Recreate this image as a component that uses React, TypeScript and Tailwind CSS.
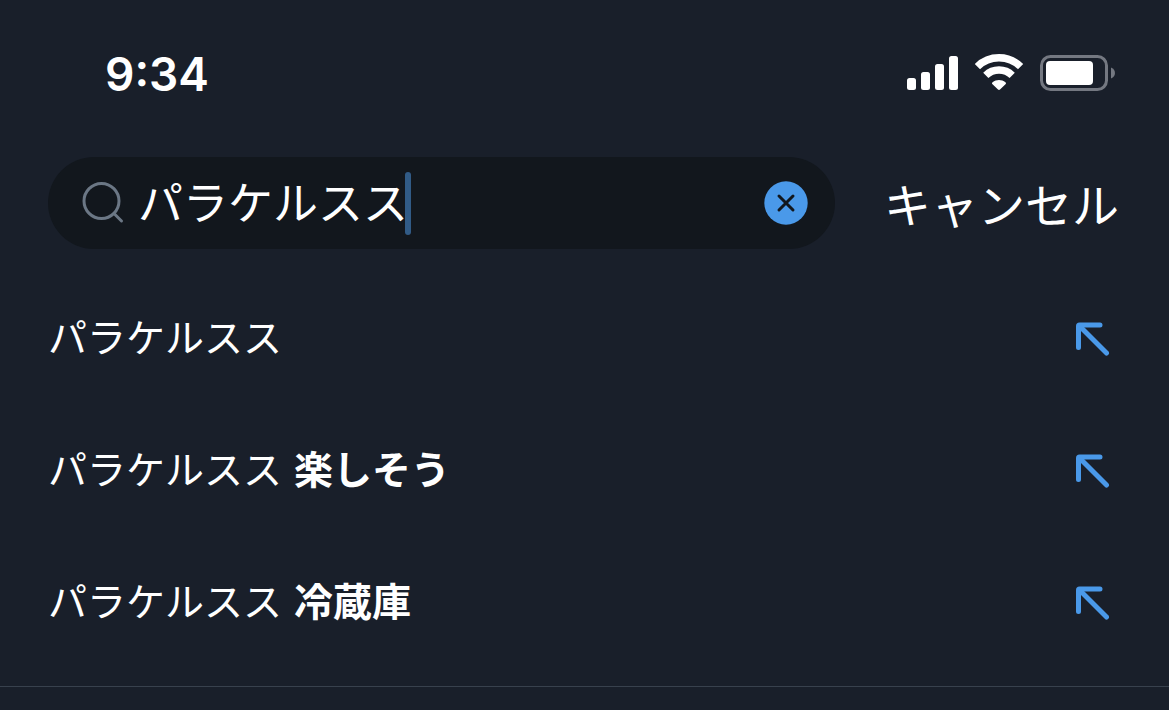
import { useRef, useState } from "react";

type Suggestion = { base: string; extra?: string };

const suggestions: Suggestion[] = [
  { base: "パラケルスス" },
  { base: "パラケルスス", extra: "楽しそう" },
  { base: "パラケルスス", extra: "冷蔵庫" },
];

function SignalIcon() {
  return (
    <svg width="52" height="36" viewBox="0 0 52 36" fill="#fff" aria-hidden="true">
      <rect x="1" y="23" width="9" height="12" rx="2.5" />
      <rect x="15" y="17" width="9" height="18" rx="2.5" />
      <rect x="29" y="9" width="9" height="26" rx="2.5" />
      <rect x="43" y="1" width="9" height="34" rx="2.5" />
    </svg>
  );
}

function WifiIcon() {
  return (
    <svg width="50" height="36" viewBox="0 0 50 36" className="overflow-visible" aria-hidden="true">
      <g fill="none" stroke="#fff" strokeWidth="7.5">
        <path d="M3.4 11.6 A31 31 0 0 1 46.6 11.6" />
        <path d="M11.8 20.4 A19 19 0 0 1 38.2 20.4" />
      </g>
      <path
        d="M18.6 27.2 C22.2 24.2 27.8 24.2 31.4 27.2 C32.2 27.9 32.2 28.6 31.5 29.2 L26 34.6 C25.4 35.2 24.6 35.2 24 34.6 L18.5 29.2 C17.8 28.6 17.8 27.9 18.6 27.2 Z"
        fill="#fff"
      />
    </svg>
  );
}

function BatteryIcon() {
  return (
    <svg width="76" height="36" viewBox="0 0 76 36" aria-hidden="true">
      <rect x="1.5" y="1.5" width="65" height="33" rx="9" fill="none" stroke="#747881" strokeWidth="3" />
      <rect x="6" y="6" width="47" height="24" rx="4" fill="#fff" />
      <path d="M71 12.5 C76.3 14.5 76.3 21.5 71 23.5 Z" fill="#747881" />
    </svg>
  );
}

function SearchIcon() {
  return (
    <svg width="42" height="42" viewBox="0 0 42 42" fill="none" stroke="#6b7785" strokeWidth="3" strokeLinecap="round" aria-hidden="true">
      <circle cx="19.5" cy="19" r="17.5" />
      <path d="M32 31.5 L39.5 39" />
    </svg>
  );
}

function ClearIcon() {
  return (
    <svg width="44" height="44" viewBox="0 0 44 44" aria-hidden="true">
      <circle cx="22" cy="22" r="21.7" fill="#4a99e9" />
      <path d="M15 15 L29 29 M29 15 L15 29" stroke="#12171d" strokeWidth="3" strokeLinecap="round" />
    </svg>
  );
}

function FillArrowIcon() {
  return (
    <svg width="34" height="34" viewBox="0 0 34 34" fill="none" stroke="#4a99e9" strokeWidth="5" strokeLinecap="round" aria-hidden="true">
      <path d="M24 3 H3.5 Q2.5 3 2.500 4 V25.5" strokeLinejoin="round" />
      <path d="M3.5 4 L30.500 31" />
    </svg>
  );
}

export default function App() {
  const [query, setQuery] = useState("パラケルスス");
  const inputRef = useRef<HTMLInputElement>(null);

  return (
    <main
      lang="ja"
      className="min-h-screen bg-[#191f2a] font-['Noto_Sans_CJK_JP',sans-serif] text-white"
    >
      <header className="flex items-end justify-between pt-12 pr-[53px] pl-[105px]">
        <time className="font-['Inter',sans-serif] text-[46px] leading-[52px] font-semibold">9:34</time>
        <div className="flex items-center gap-4 pb-[9px]">
          <SignalIcon />
          <WifiIcon />
          <BatteryIcon />
        </div>
      </header>

      <form
        role="search"
        className="mt-[57px] flex items-center gap-[49px] pr-[50px] pl-12"
        onSubmit={(event) => event.preventDefault()}
      >
        <div className="flex h-[92px] min-w-0 flex-1 items-center rounded-full bg-[#12171d] pr-[27px] pl-[34px]">
          <label htmlFor="query" className="shrink-0">
            <SearchIcon />
          </label>
          <div className="ml-3.5 flex min-w-0 flex-1 items-center">
            <input
              id="query"
              ref={inputRef}
              type="text"
              aria-label="検索"
              value={query}
              onChange={(event) => setQuery(event.target.value)}
              className="min-w-0 bg-transparent pb-1 text-[45px] leading-[64px] font-normal caret-transparent outline-none [field-sizing:content]"
            />
            <span className="-ml-[3px] h-[63px] w-1.5 shrink-0 rounded-sm bg-[#315b86]" />
          </div>
          <button
            type="button"
            aria-label="クリア"
            className="shrink-0"
            onClick={() => {
              setQuery("");
              inputRef.current?.focus();
            }}
          >
            <ClearIcon />
          </button>
        </div>
        <button type="button" className="shrink-0 text-[47px] leading-[64px] font-normal">
          キャンセル
        </button>
      </form>

      <ul className="mt-6 border-b border-[#38414d] pb-[17px]">
        {suggestions.map(({ base, extra }) => (
          <li key={base + (extra ?? "")} className="flex h-[132px] items-center justify-between pr-[59px] pl-12">
            <button type="button" className="pb-2 text-left text-[39px] leading-[56px] font-normal">
              {base}
              {extra && <b className="ml-[3px] font-bold"> {extra}</b>}
            </button>
            <button
              type="button"
              aria-label="検索欄に入力"
              onClick={() => setQuery(extra ? `${base} ${extra}` : base)}
            >
              <FillArrowIcon />
            </button>
          </li>
        ))}
      </ul>
    </main>
  );
}
